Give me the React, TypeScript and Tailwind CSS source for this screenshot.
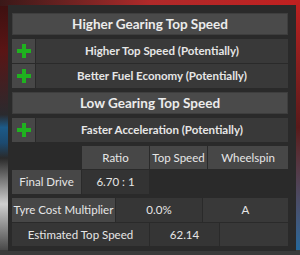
import React from "react";

const font = { fontFamily: 'Lato, "Noto Sans", sans-serif' };

function Plus() {
  return (
    <svg width="14" height="14" viewBox="0 0 14 14">
      <rect x="5" y="0" width="4" height="14" fill="#1fb21f" />
      <rect x="0" y="5" width="14" height="4" fill="#1fb21f" />
    </svg>
  );
}

function Header({ children }: { children: React.ReactNode }) {
  return (
    <div className="h-[22px] flex items-center justify-center bg-[#4a4a4a] border border-[#3e3e3e] text-[13.5px] font-bold text-[#ececec] whitespace-nowrap">
      {children}
    </div>
  );
}

function PlusRow({ text }: { text: string }) {
  return (
    <div className="h-[24px] flex gap-px">
      <div className="w-[23px] flex items-center justify-center bg-[#474747]">
        <Plus />
      </div>
      <div className="flex-1 flex items-center justify-center bg-[#393939] text-[11.5px] font-bold text-[#e6e6e6] whitespace-nowrap">
        {text}
      </div>
    </div>
  );
}

export default function App() {
  return (
    <div
      className="w-[300px] h-[255px] overflow-hidden relative"
      style={{
        ...font,
        background:
          "linear-gradient(180deg, #3a1010 0%, #5a1515 20%, #2a2a2e 45%, #1c5a88 50%, #1c4a70 56%, #2a2a2a 62%, #cfcfcf 80%, #3a3a3a 100%)",
      }}
    >
      <div className="absolute inset-x-0 top-0 h-[6px] bg-gradient-to-r from-[#3a1818] via-[#b02a2a] to-[#c02020]" />
      <div className="absolute right-0 top-0 w-[6px] h-full bg-gradient-to-b from-[#c02020] via-[#5a1a1a] to-[#1a6aa0]" />
      <div className="absolute left-0 right-0 bottom-0 h-[5px] bg-[#3a3a3a]" />
      <div className="absolute left-[8px] top-[5px] w-[288px] h-[246px] bg-[#2a2a2a] pl-1 pr-2 pt-2">
        <div className="flex flex-col text-[#e6e6e6]">
          <Header>Higher Gearing Top Speed</Header>
          <div className="h-[4px]" />
          <PlusRow text="Higher Top Speed (Potentially)" />
          <div className="h-px" />
          <PlusRow text="Better Fuel Economy (Potentially)" />
          <div className="h-[4px]" />
          <Header>Low Gearing Top Speed</Header>
          <div className="h-[4px]" />
          <PlusRow text="Faster Acceleration (Potentially)" />
          <div className="h-[4px]" />
          <div className="h-[23px] flex gap-px text-[11.5px] whitespace-nowrap">
            <div className="w-[69px]" />
            <div className="w-[67px] flex items-center justify-center bg-[#474747]">Ratio</div>
            <div className="w-[57px] flex items-center justify-center bg-[#474747]">Top Speed</div>
            <div className="flex-1 flex items-center justify-center bg-[#474747]">Wheelspin</div>
          </div>
          <div className="h-[24px] flex gap-px text-[11.5px] mt-px whitespace-nowrap">
            <div className="w-[69px] flex items-center justify-center bg-[#474747]">Final Drive</div>
            <div className="w-[67px] flex items-center justify-center bg-[#333333]">6.70 : 1</div>
            <div className="flex-1 bg-[#2a2a2a]" />
          </div>
          <div className="h-[4px]" />
          <div className="h-[24px] flex gap-px text-[11.5px] whitespace-nowrap">
            <div className="w-[103px] flex items-center justify-center bg-[#474747]">Tyre Cost Multiplier</div>
            <div className="w-[86px] flex items-center justify-center bg-[#363636]">0.0%</div>
            <div className="flex-1 flex items-center justify-center bg-[#393939]">A</div>
          </div>
          <div className="h-[23px] flex gap-px text-[11.5px] mt-px whitespace-nowrap">
            <div className="w-[137px] flex items-center justify-center bg-[#363636]">Estimated Top Speed</div>
            <div className="w-[69px] flex items-center justify-center bg-[#353535]">62.14</div>
            <div className="flex-1 bg-[#383838]" />
          </div>
        </div>
      </div>
    </div>
  );
}
